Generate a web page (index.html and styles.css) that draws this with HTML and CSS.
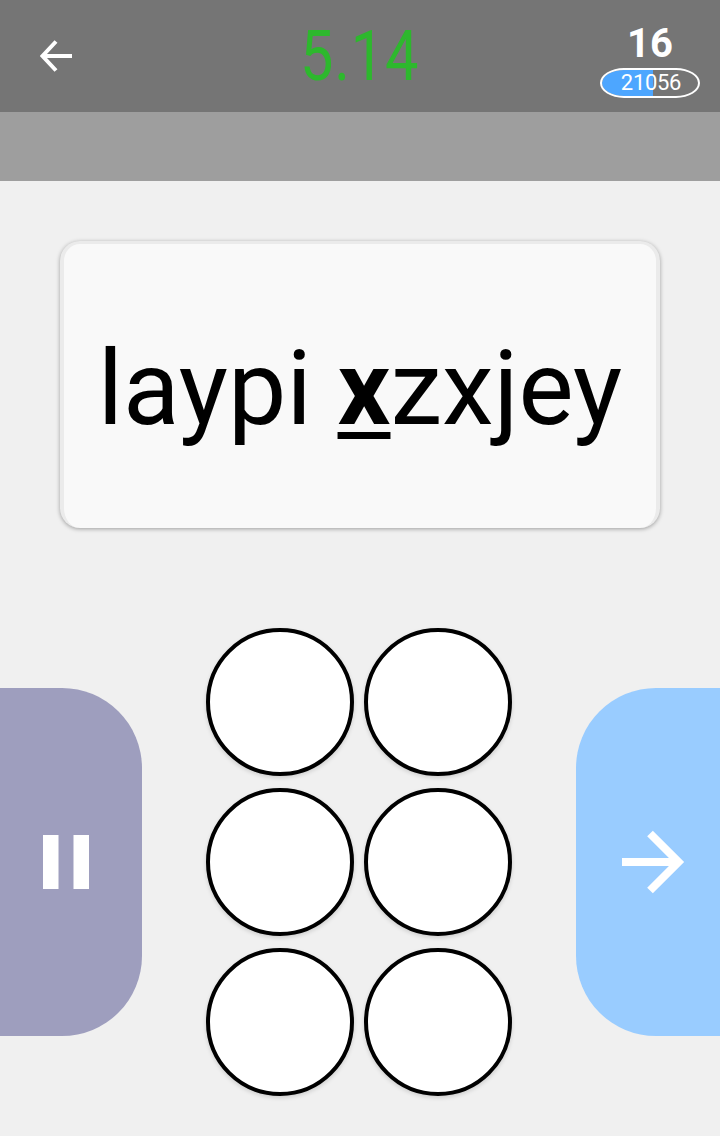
FILE: index.html
```html
<!DOCTYPE html>
<html lang="en">
<head>
    <meta charset="UTF-8">
    <title>Braille</title>
    <link rel="stylesheet" href="styles.css">
</head>
<body>
    <header class="topbar">
        <button class="back" aria-label="Back">
            <svg width="32" height="32" viewBox="0 0 32 32">
                <path d="M16 1.5L2.5 16L16 30.5M3 16H32" fill="none" stroke="#fff" stroke-width="4"/>
            </svg>
        </button>
        <div class="timer">5.14</div>
        <div class="level">
            <div class="level-number">16</div>
            <div class="score">21056</div>
        </div>
    </header>
    <div class="subbar"></div>

    <!-- Word to type -->
    <section class="card">
        <div class="word">laypi <b class="current">x</b>zxjey</div>
    </section>

    <!-- Braille cell and side buttons -->
    <main class="controls">
        <button class="side pause" aria-label="Pause">
            <svg width="48" height="54" viewBox="0 0 48 54">
                <path d="M0 0H15.5V54H0zM30.5 0H46V54H30.5z" fill="#fff"/>
            </svg>
        </button>
        <div class="cell">
            <button class="pin"></button>
            <button class="pin"></button>
            <button class="pin"></button>
            <button class="pin"></button>
            <button class="pin"></button>
            <button class="pin"></button>
        </div>
        <button class="side next" aria-label="Next">
            <svg width="64" height="64" viewBox="0 0 64 64">
                <path d="M1 32H56M29 3.5L57.5 32L29 60.5" fill="none" stroke="#fff" stroke-width="8"/>
            </svg>
        </button>
    </main>
</body>
</html>
```
FILE: styles.css
```css
* {
    box-sizing: border-box;
}
body {
    margin: 0;
    height: 1136px;
    background: #f0f0f0;
    font-family: Roboto, sans-serif;
    overflow: hidden;
}
button {
    padding: 0;
    border: none;
    background: none;
    cursor: pointer;
}
svg {
    display: block;
}
.topbar {
    height: 112px;
    padding: 0 20px 0 40px;
    background: #757575;
    display: grid;
    grid-template-columns: 260px 1fr 100px;
    align-items: center;
}
.back {
    width: 32px;
}
.timer {
    width: 140px;
    color: #2db82d;
    font-size: 70px;
    line-height: 72px;
    letter-spacing: 1px;
    white-space: nowrap;
    transform: scaleX(0.85);
    transform-origin: left;
}
.level {
    height: 112px;
    padding-top: 20px;
    color: #fff;
    text-align: center;
}
.level-number {
    height: 48px;
    font-size: 40px;
    line-height: 47px;
    font-weight: bold;
}
.score {
    height: 30px;
    padding-left: 2px;
    border: 2px solid #fff;
    border-radius: 24px / 15px;
    background: linear-gradient(to right, #4da6ff 53%, #757575 53%) padding-box;
    font-size: 22px;
    line-height: 26px;
    letter-spacing: -0.3px;
}
.subbar {
    height: 69px;
    background: #9e9e9e;
}
.card {
    width: 600px;
    height: 287px;
    margin: 60px auto 0;
    border: solid #ebebeb;
    border-width: 3px 4px 0;
    border-radius: 20px;
    background: #f9f9f9;
    box-shadow: 0 1px 4px rgba(0, 0, 0, 0.35);
}
.word {
    padding-top: 83px;
    font-size: 104px;
    line-height: 124px;
    text-align: center;
    white-space: nowrap;
}
.current {
    text-decoration: underline;
    text-decoration-thickness: 7px;
    text-underline-offset: 8px;
}
.controls {
    margin-top: 100px;
    display: grid;
    grid-template-columns: 142px 1fr 144px;
    align-items: center;
}
.side {
    height: 348px;
    display: flex;
    align-items: center;
}
.pause {
    padding-left: 43px;
    background: #9e9ebe;
    border-radius: 0 80px 80px 0;
}
.next {
    padding-left: 45px;
    background: #99ccff;
    border-radius: 80px 0 0 80px;
}
.cell {
    display: grid;
    grid-template-columns: 148px 148px;
    gap: 12px 10px;
    justify-content: center;
}
.pin {
    height: 148px;
    border: 4px solid #000;
    border-radius: 50%;
    background: #fff;
    box-shadow: 0 2px 4px rgba(0, 0, 0, 0.15);
}
```
